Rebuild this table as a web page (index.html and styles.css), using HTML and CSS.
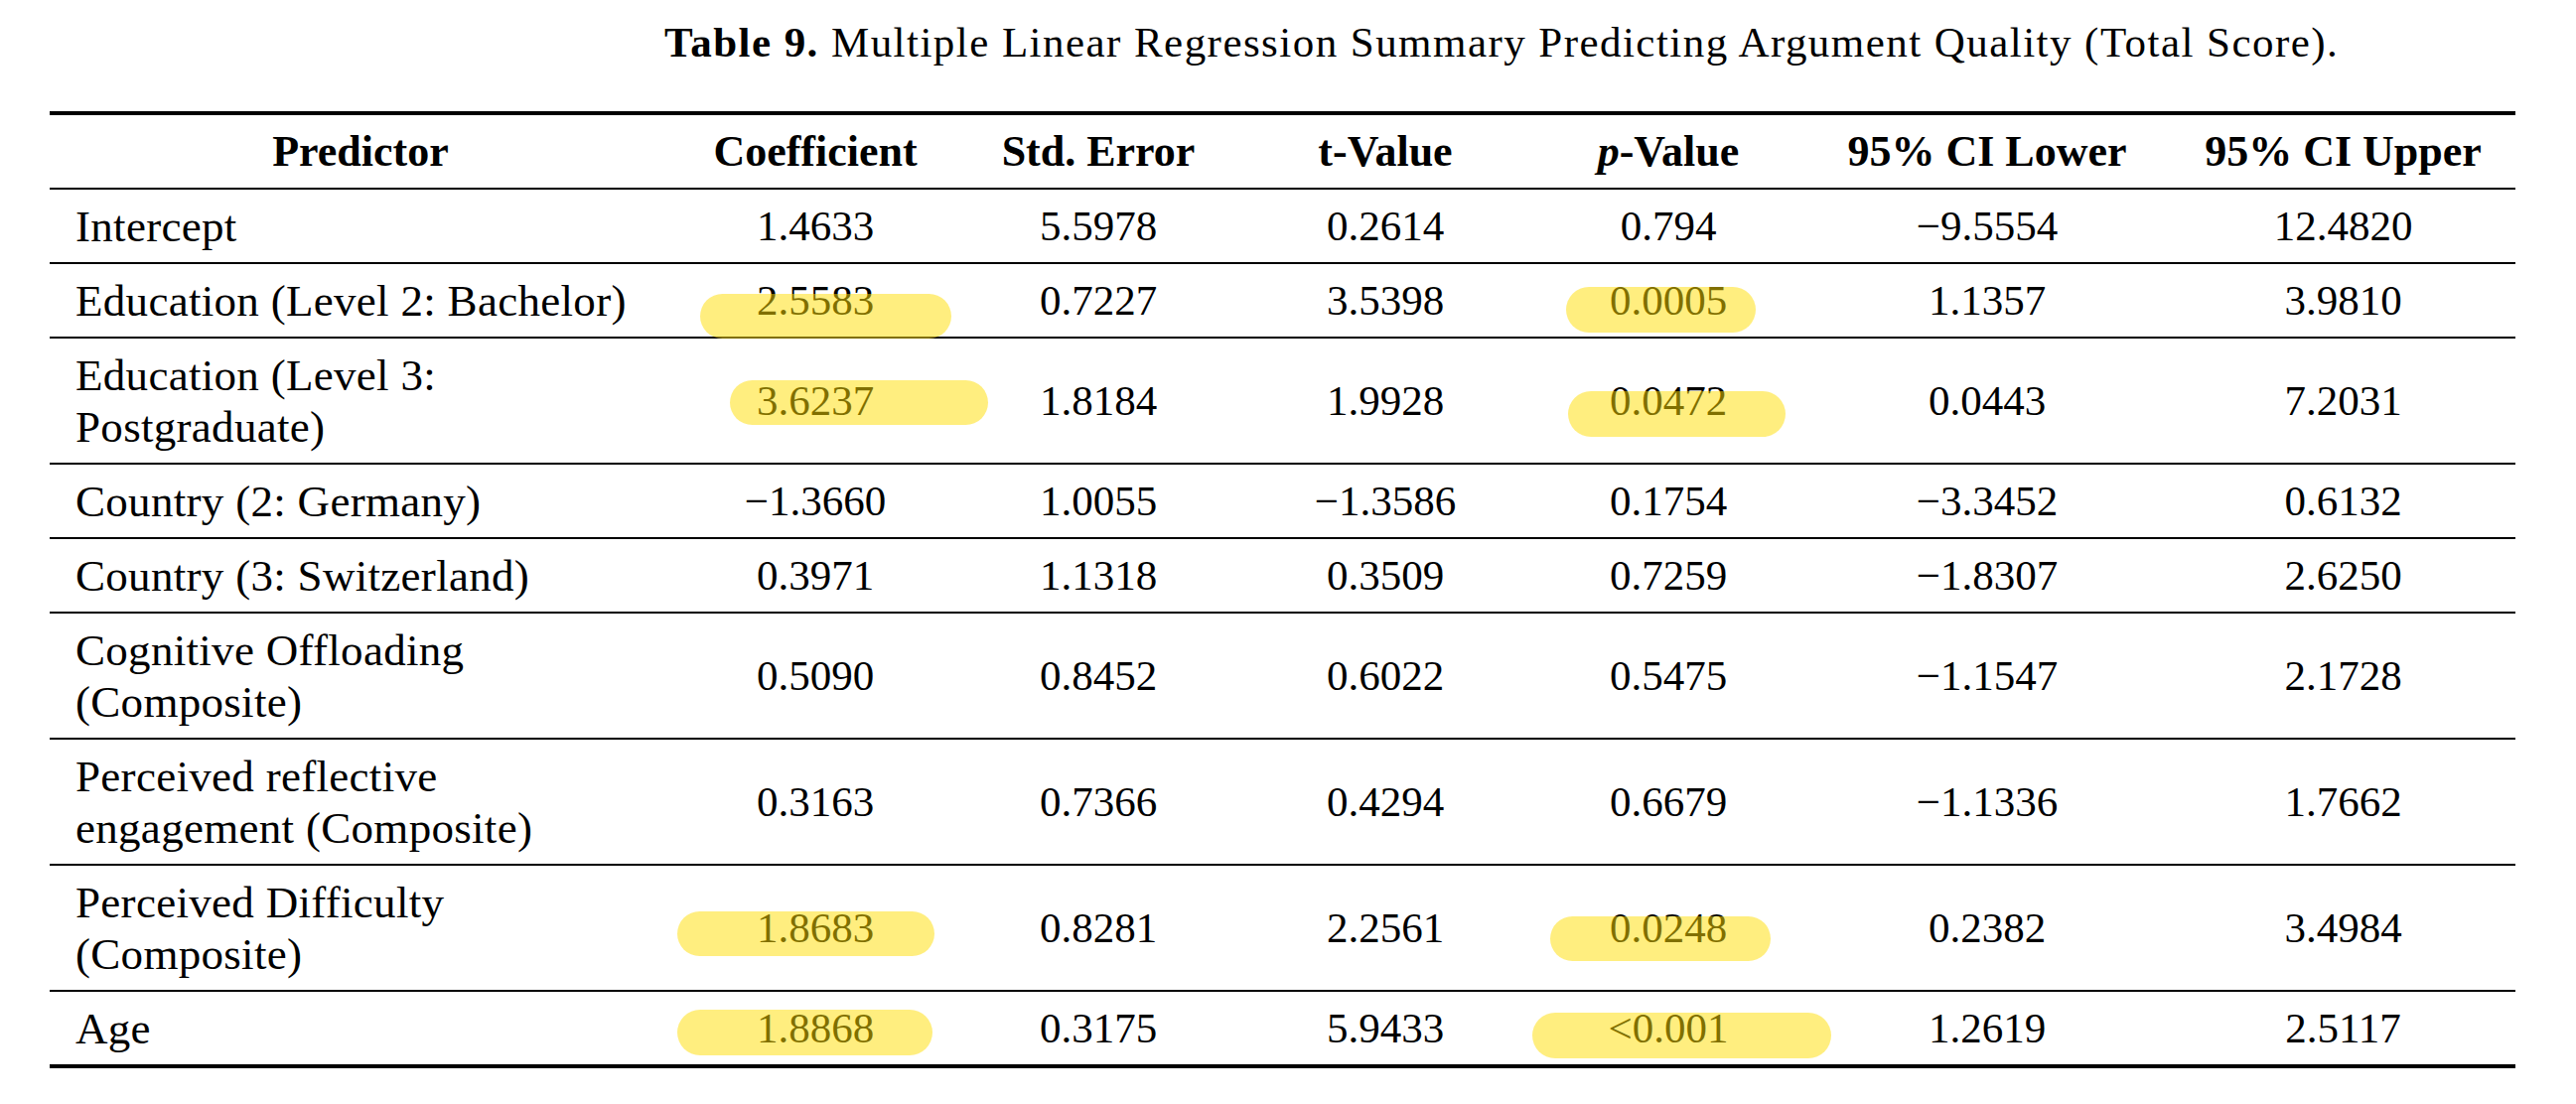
FILE: index.html
```html
<!DOCTYPE html>
<html lang="en">
<head>
<meta charset="utf-8">
<title>Table 9</title>
<link rel="stylesheet" href="styles.css">
</head>
<body>
<div class="page">
  <p class="caption"><b>Table 9.</b> Multiple Linear Regression Summary Predicting Argument Quality (Total Score).</p>
  <table class="reg">
    <colgroup>
      <col class="c1"><col class="c2"><col class="c3"><col class="c4"><col class="c5"><col class="c6"><col class="c7">
    </colgroup>
    <thead>
      <tr>
        <th>Predictor</th>
        <th>Coefficient</th>
        <th>Std. Error</th>
        <th>t-Value</th>
        <th><i>p</i>-Value</th>
        <th>95% CI Lower</th>
        <th>95% CI Upper</th>
      </tr>
    </thead>
    <tbody>
      <tr>
        <td class="lbl">Intercept</td>
        <td>1.4633</td><td>5.5978</td><td>0.2614</td><td>0.794</td><td>&minus;9.5554</td><td>12.4820</td>
      </tr>
      <tr>
        <td class="lbl">Education (Level 2: Bachelor)</td>
        <td class="mark"><span class="hl hl1"></span>2.5583</td><td>0.7227</td><td>3.5398</td><td class="mark"><span class="hl hl2"></span>0.0005</td><td>1.1357</td><td>3.9810</td>
      </tr>
      <tr>
        <td class="lbl">Education (Level 3:<br>Postgraduate)</td>
        <td class="mark"><span class="hl hl3"></span>3.6237</td><td>1.8184</td><td>1.9928</td><td class="mark"><span class="hl hl4"></span>0.0472</td><td>0.0443</td><td>7.2031</td>
      </tr>
      <tr>
        <td class="lbl">Country (2: Germany)</td>
        <td>&minus;1.3660</td><td>1.0055</td><td>&minus;1.3586</td><td>0.1754</td><td>&minus;3.3452</td><td>0.6132</td>
      </tr>
      <tr>
        <td class="lbl">Country (3: Switzerland)</td>
        <td>0.3971</td><td>1.1318</td><td>0.3509</td><td>0.7259</td><td>&minus;1.8307</td><td>2.6250</td>
      </tr>
      <tr>
        <td class="lbl">Cognitive Offloading<br>(Composite)</td>
        <td>0.5090</td><td>0.8452</td><td>0.6022</td><td>0.5475</td><td>&minus;1.1547</td><td>2.1728</td>
      </tr>
      <tr>
        <td class="lbl">Perceived reflective<br>engagement (Composite)</td>
        <td>0.3163</td><td>0.7366</td><td>0.4294</td><td>0.6679</td><td>&minus;1.1336</td><td>1.7662</td>
      </tr>
      <tr>
        <td class="lbl">Perceived Difficulty<br>(Composite)</td>
        <td class="mark"><span class="hl hl5"></span>1.8683</td><td>0.8281</td><td>2.2561</td><td class="mark"><span class="hl hl6"></span>0.0248</td><td>0.2382</td><td>3.4984</td>
      </tr>
      <tr>
        <td class="lbl">Age</td>
        <td class="mark"><span class="hl hl7"></span>1.8868</td><td>0.3175</td><td>5.9433</td><td class="mark"><span class="hl hl8"></span>&lt;0.001</td><td>1.2619</td><td>2.5117</td>
      </tr>
    </tbody>
  </table>
</div>
</body>
</html>
```
FILE: styles.css
```css
html, body {
  margin: 0;
  padding: 0;
  background: #ffffff;
}

.page {
  padding: 19px 0 0 50px;
  font-family: "Liberation Serif", "Times New Roman", serif;
  color: #000000;
}

.caption {
  margin: 0 0 45px 619px;
  font-size: 43px;
  line-height: 48px;
  letter-spacing: 1.45px;
  white-space: nowrap;
}

.reg {
  border-collapse: collapse;
  table-layout: fixed;
  width: 2483px;
  border-top: 4px solid #000;
  border-bottom: 4px solid #000;
}

.c1 { width: 626px; }
.c2 { width: 290px; }
.c3 { width: 280px; }
.c4 { width: 298px; }
.c5 { width: 272px; }
.c6 { width: 370px; }
.c7 { width: 347px; }

.reg th,
.reg td {
  padding: 10.5px 26px;
  line-height: 52px;
  text-align: center;
  vertical-align: middle;
  border-bottom: 2px solid #000;
  white-space: nowrap;
}

.reg th {
  font-size: 44px;
  font-weight: bold;
}

.reg td {
  font-size: 43px;
}

.reg td.lbl {
  text-align: left;
  font-size: 45px;
  letter-spacing: 0.3px;
}

.reg tbody tr:last-child td {
  border-bottom: none;
}

.mark {
  position: relative;
}

.hl {
  position: absolute;
  background: rgba(255, 222, 0, 0.5);
  border-radius: 23px;
  height: 45px;
  z-index: 1;
}

.hl1 { left: 29px; top: 30px; width: 253px; }
.hl2 { left: 33px; top: 23px; width: 191px; height: 46px; }
.hl3 { left: 59px; top: 42px; width: 260px; }
.hl4 { left: 35px; top: 53px; width: 219px; height: 46px; }
.hl5 { left: 6px; top: 46px; width: 259px; }
.hl6 { left: 17px; top: 51px; width: 222px; }
.hl7 { left: 6px; top: 18px; width: 257px; height: 46px; }
.hl8 { left: -1px; top: 21px; width: 301px; height: 46px; }
```
